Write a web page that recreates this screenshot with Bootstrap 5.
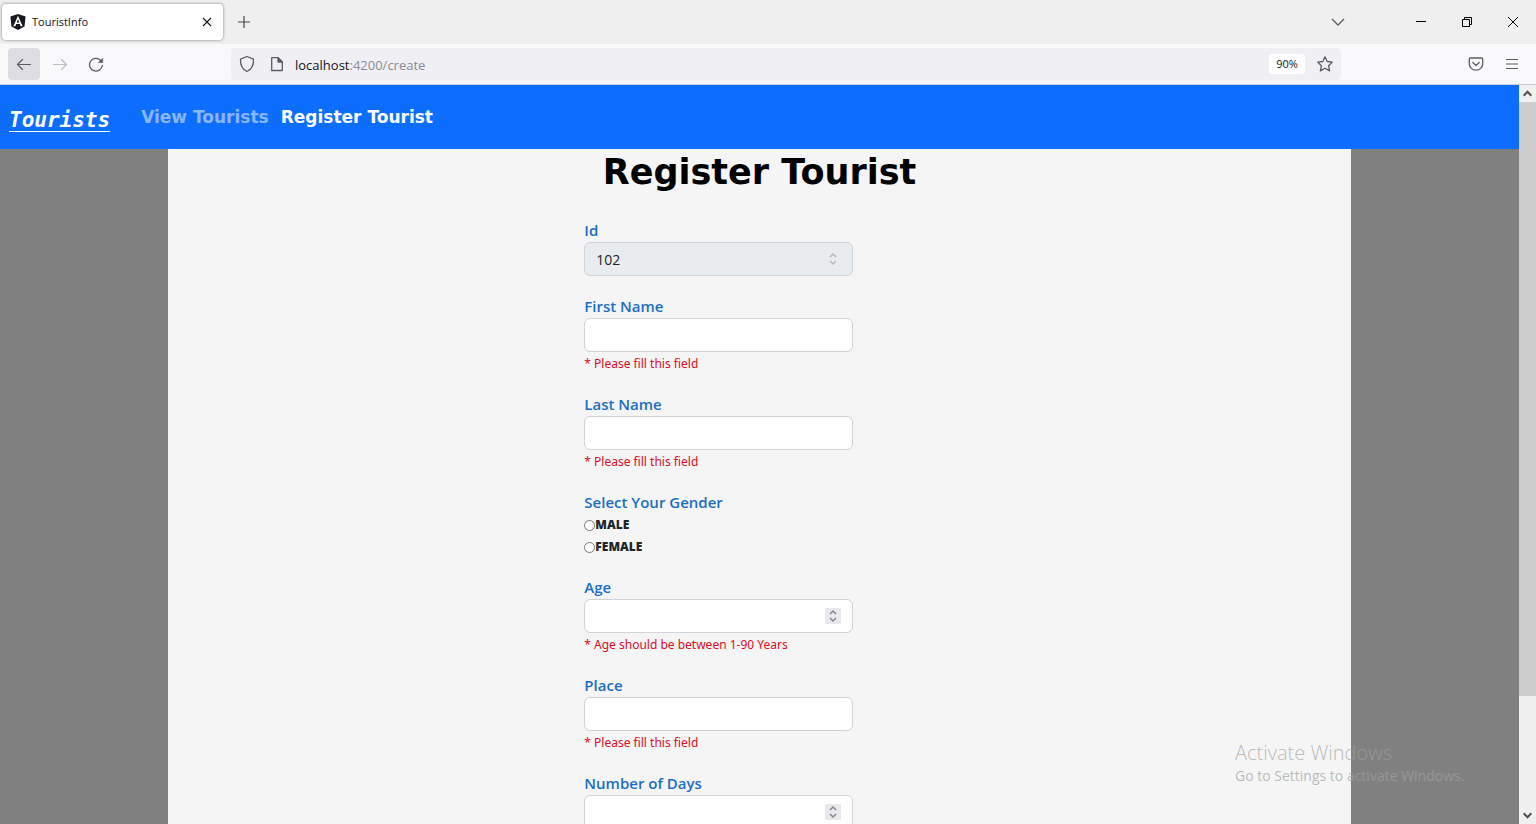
<!DOCTYPE html>
<html lang="en">
<head>
<meta charset="utf-8">
<meta name="viewport" content="width=device-width, initial-scale=1">
<title>TouristInfo</title>
<link href="https://cdn.jsdelivr.net/npm/bootstrap@5.3.0/dist/css/bootstrap.min.css" rel="stylesheet">
<style>
body { font-family: "Open Sans", "Noto Sans", sans-serif; color: #15141a; }
svg { display: block; fill: none; stroke: currentColor; }
.plain-btn { border: 0; background: none; padding: 0; color: inherit; display: flex; align-items: center; justify-content: center; flex: none; }
/* tab strip */
.tab-strip { height: 44px; background: #efefef; }
.browser-tab { width: 221px; height: 36px; margin-left: 2px; background: #fff; border-radius: 4px; box-shadow: 0 0 3px rgba(0,0,0,.5); font-size: 11px; padding: 0 7px 0 8px; gap: 6px; }
.tab-logo { stroke: none; }
.win-btn { width: 46px; height: 44px; color: #000; }
/* toolbar */
.tool-bar { height: 41px; background: #f9f9fb; border-bottom: 1px solid #c8cdd6; color: #5b5b66; }
.tool-btn { width: 32px; height: 32px; border-radius: 4px; }
.tool-btn.is-active { background: #dddde3; }
.tool-btn:disabled { color: #bdbdc3; }
.url-bar { height: 32px; background: #f0f0f4; border-radius: 4px; margin-left: 119px; margin-right: 119px; }
.url-text { font-size: 13px; line-height: 20px; padding-top: 2px; color: #8a8a92; }
.url-text b { font-weight: 400; color: #15141a; }
.zoom-level { width: 36px; height: 20px; border-radius: 3px; background: #fff; color: #15141a; font-size: 11px; }
/* page */
.app-page { background: #808080; }
.app-nav { height: 64px; padding: 0 9px; background: #0d6efd; font-family: "DejaVu Sans", sans-serif; }
.app-nav .navbar-brand { font: italic 700 21px/24px "DejaVu Sans Mono", monospace; color: #fff; text-decoration: underline; text-underline-offset: 4px; text-decoration-thickness: 1px; padding: 6px 0 0; margin: 0 31px 0 0; }
.app-nav .nav-link { font-size: 17px; font-weight: 700; line-height: 24px; padding: 0; }
.nav-links { gap: 12px; }
.app-body { padding: 0 168px; }
.app-panel { background: #f5f5f5; }
.app-title { font: 700 35px/46px "DejaVu Sans", sans-serif; color: #000; margin: 0 0 23px; }
.form-column { padding-left: 22px; }
.field { max-width: 269px; margin-bottom: 18px; }
fieldset.field { margin-bottom: 17px; }
.field-label { display: block; font-size: 15px; font-weight: 600; line-height: 24px; color: #1b6ec2; margin: 0; padding: 0; float: none; }
.field .form-control { height: 34px; padding: 0 11px; font-size: 14px; border-color: #ced4da; border-radius: 6px; color: #212529; appearance: textfield; }
.field .form-control:disabled { background: #e9ecef; }
.field input::-webkit-inner-spin-button { appearance: none; margin: 0; }
.spinner-mark { position: absolute; right: 12px; top: 9px; width: 16px; height: 16px; background: #e9e9ed; color: #85858b; }
.spinner-mark.is-off { background: none; color: #b9bcbf; }
.field-error { font-size: 12px; line-height: 22px; padding-top: 1px; height: 22px; color: #dc0c25; font-family: "Noto Sans", sans-serif; }
.radio-row { height: 22px; font: 800 12px/22px "Open Sans", sans-serif; color: #212529; }
.radio-row input { width: 11px; height: 11px; margin: 0; }
/* scrollbar */
.scroll-track { width: 17px; background: #f0f0f0; color: #505050; }
.scroll-track .plain-btn { height: 17px; }
.scroll-thumb { background: #cdcdcd; flex: 594 0 0; }
.scroll-rest { flex: 111 0 0; }
.watermark { position: absolute; right: 65px; bottom: 38px; color: rgba(160,160,160,.7); pointer-events: none; width: 236px; white-space: nowrap; }
.watermark-title { font-size: 20px; line-height: 24px; font-weight: 300; }
.watermark-note { font-size: 14px; line-height: 21px; }
</style>
</head>
<body>
<div class="vh-100 d-flex flex-column overflow-hidden position-relative">
  <header class="flex-shrink-0">
    <div class="tab-strip d-flex align-items-center">
      <div class="browser-tab d-flex align-items-center">
        <svg class="tab-logo" width="16" height="16" viewBox="0 0 16 16"><path d="M8 0 15.6 2.6 14.5 12.5 8 16 1.5 12.5.4 2.6Z" fill="#15171f"/><path d="M8 1.8 3.3 12.3H5.3L6.200 10H9.800L10.700 12.300H12.700ZM8 5.200 9.300 8.400H6.700Z" fill="#fff" fill-rule="evenodd"/></svg>
        <span class="flex-grow-1">TouristInfo</span>
        <button class="plain-btn" aria-label="Close tab"><svg width="18" height="16" viewBox="0 0 18 16"><path d="m5 4 8 8m0-8-8 8" stroke-width="1.100"/></svg></button>
      </div>
      <button class="plain-btn ms-2 ps-1" aria-label="New tab"><svg width="18" height="18" viewBox="0 0 18 18" stroke-width="1.200" color="#45454d"><path d="M9 3v12M3 9h12"/></svg></button>
      <div class="ms-auto d-flex align-items-center">
        <button class="plain-btn me-5" aria-label="List all tabs"><svg width="16" height="16" viewBox="0 0 16 16" color="#5b5b66" stroke-width="1.300"><path d="m2 5 6 6 6-6"/></svg></button>
        <button class="plain-btn win-btn ms-1" aria-label="Minimize"><svg width="10" height="10" viewBox="0 0 10 10"><path d="M0 4.500h10"/></svg></button>
        <button class="plain-btn win-btn" aria-label="Restore"><svg width="10" height="10" viewBox="0 0 10 10"><path d="M.5 2.500h7v7h-7ZM2.500 2.500v-2h7v7h-2"/></svg></button>
        <button class="plain-btn win-btn" aria-label="Close"><svg width="10" height="10" viewBox="0 0 10 10"><path d="m0 0 10 10M10 0 0 10"/></svg></button>
      </div>
    </div>
    <div class="tool-bar d-flex align-items-center px-2">
      <button class="plain-btn tool-btn is-active" aria-label="Back"><svg width="16" height="16" viewBox="0 0 16 16" stroke-width="1.200" stroke-linecap="round" stroke-linejoin="round"><path d="M14.500 8.500H1.500M6.500 3.500 1.500 8.500 6.500 13.500"/></svg></button>
      <button class="plain-btn tool-btn ms-1" aria-label="Forward" disabled><svg width="16" height="16" viewBox="0 0 16 16" stroke-width="1.200" stroke-linecap="round" stroke-linejoin="round"><path d="M1.500 8.500h13M9.500 3.500 14.500 8.500 9.500 13.500"/></svg></button>
      <button class="plain-btn tool-btn ms-1" aria-label="Reload"><svg width="16" height="16" viewBox="0 0 16 16" stroke-width="1.300" stroke-linecap="round"><path d="M14.300 9.500A6.400 6.400 0 1 1 12.500 4.200"/><path d="M14.700 2.500V6.500h-4Z" fill="currentColor" stroke-width=".6"/></svg></button>
      <div class="url-bar d-flex align-items-center flex-grow-1 px-2">
        <svg width="16" height="18" viewBox="0 0 16 18" stroke-width="1.300" stroke-linejoin="round"><path d="M8 1.500 14.500 4.200C14.700 9.500 12.500 14.500 8 16.500 3.500 14.500 1.300 9.500 1.500 4.200Z"/></svg>
        <svg class="ms-3" width="12" height="16" viewBox="0 0 12 16" stroke-width="1.300" stroke-linejoin="round"><path d="M.7 1.700H7l4.300 4.300v8.500H.7Z"/><path d="M7 1.700V6h4.300Z" fill="currentColor"/></svg>
        <span class="url-text flex-grow-1 ms-2 ps-1"><b>localhost</b>:4200/create</span>
        <button class="plain-btn zoom-level me-2">90%</button>
        <button class="plain-btn ms-1" aria-label="Bookmark this page"><svg width="16" height="16" viewBox="0 0 16 16" stroke-width="1.300" stroke-linejoin="round"><path d="m8 .8 2.200 4.700 5.100.6-3.700 3.600 1 5.200L8 12.300 3.400 14.900l1-5.200L.7 6.100l5.100-.6Z"/></svg></button>
      </div>
      <button class="plain-btn tool-btn" aria-label="Save to Pocket"><svg width="16" height="16" viewBox="0 0 16 16" stroke-width="1.300" stroke-linecap="round" stroke-linejoin="round"><path d="M2.500 2h11q1.200 0 1.200 1.200V8A6.700 6.200 0 0 1 1.300 8V3.200Q1.300 2 2.500 2ZM4.800 6.500 8 9.500l3.200-3"/></svg></button>
      <button class="plain-btn tool-btn ms-1" aria-label="Open menu"><svg width="14" height="14" viewBox="0 0 14 14" stroke-width="1.200"><path d="M1 2.500h12M1 7h12M1 11.500h12"/></svg></button>
    </div>
  </header>

  <div class="d-flex flex-grow-1 overflow-hidden">
    <div class="app-page flex-grow-1 overflow-hidden">
      <nav class="app-nav d-flex align-items-center" data-bs-theme="dark">
        <a class="navbar-brand" href="#">Tourists</a>
        <div class="nav-links d-flex">
          <a class="nav-link text-white text-opacity-50" href="#">View Tourists</a>
          <a class="nav-link text-white" href="#" aria-current="page">Register Tourist</a>
        </div>
      </nav>
      <main class="app-body">
        <div class="app-panel">
          <h1 class="app-title text-center">Register Tourist</h1>
          <form class="row g-0">
            <div class="col-4 offset-4 form-column">
              <div class="field">
                <label class="field-label" for="touristId">Id</label>
                <div class="position-relative">
                  <input class="form-control" type="number" id="touristId" value="102" disabled>
                  <svg class="spinner-mark is-off" viewBox="0 0 16 16" stroke-width="1.500"><path d="m5 6 3-3 3 3M5 10l3 3 3-3"/></svg>
                </div>
              </div>
              <div class="field">
                <label class="field-label" for="firstName">First Name</label>
                <input class="form-control" type="text" id="firstName">
                <div class="field-error">* Please fill this field</div>
              </div>
              <div class="field">
                <label class="field-label" for="lastName">Last Name</label>
                <input class="form-control" type="text" id="lastName">
                <div class="field-error">* Please fill this field</div>
              </div>
              <fieldset class="field">
                <legend class="field-label">Select Your Gender</legend>
                <div class="radio-row d-flex align-items-center"><input type="radio" name="gender" id="male"><label for="male">MALE</label></div>
                <div class="radio-row d-flex align-items-center"><input type="radio" name="gender" id="female"><label for="female">FEMALE</label></div>
              </fieldset>
              <div class="field">
                <label class="field-label" for="age">Age</label>
                <div class="position-relative">
                  <input class="form-control" type="number" id="age">
                  <svg class="spinner-mark" viewBox="0 0 16 16" stroke-width="1.500"><path d="m5 6 3-3 3 3M5 10l3 3 3-3"/></svg>
                </div>
                <div class="field-error">* Age should be between 1-90 Years</div>
              </div>
              <div class="field">
                <label class="field-label" for="place">Place</label>
                <input class="form-control" type="text" id="place">
                <div class="field-error">* Please fill this field</div>
              </div>
              <div class="field">
                <label class="field-label" for="days">Number of Days</label>
                <div class="position-relative">
                  <input class="form-control" type="number" id="days">
                  <svg class="spinner-mark" viewBox="0 0 16 16" stroke-width="1.500"><path d="m5 6 3-3 3 3M5 10l3 3 3-3"/></svg>
                </div>
              </div>
            </div>
          </form>
        </div>
      </main>
    </div>
    <div class="scroll-track d-flex flex-column flex-shrink-0">
      <button class="plain-btn" aria-label="Scroll up"><svg width="9" height="7" viewBox="0 0 9 7" stroke-width="2"><path d="m.7 5.700 3.800-4 3.800 4"/></svg></button>
      <div class="scroll-thumb"></div>
      <div class="scroll-rest"></div>
      <button class="plain-btn" aria-label="Scroll down"><svg width="9" height="7" viewBox="0 0 9 7" stroke-width="2"><path d="m.7 1.300 3.800 4 3.800-4"/></svg></button>
    </div>
  </div>

  <div class="watermark">
    <div class="watermark-title">Activate Windows</div>
    <div class="watermark-note">Go to Settings to activate Windows.</div>
  </div>
</div>
<script src="https://cdn.jsdelivr.net/npm/bootstrap@5.3.0/dist/js/bootstrap.bundle.min.js"></script>
</body>
</html>
